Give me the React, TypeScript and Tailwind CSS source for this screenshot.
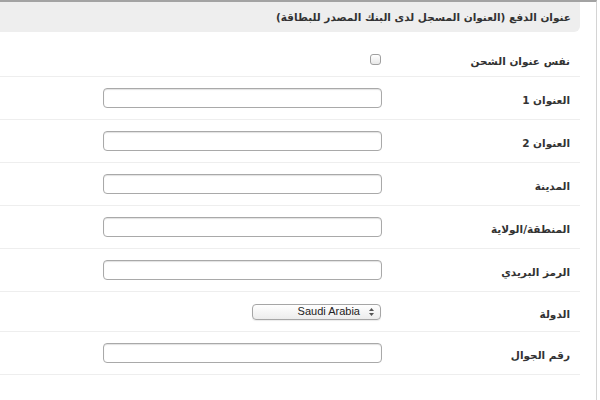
import { useState } from 'react'

const FIELDS = [
  { label: 'العنوان 1', kind: 'text' },
  { label: 'العنوان 2', kind: 'text' },
  { label: 'المدينة', kind: 'text' },
  { label: 'المنطقة/الولاية', kind: 'text' },
  { label: 'الرمز البريدي', kind: 'text' },
  { label: 'الدولة', kind: 'select' },
  { label: 'رقم الجوال', kind: 'text' },
] as const

function TextInput() {
  return (
    <input
      type="text"
      className="h-[20px] w-[279px] rounded-[4px] border border-[#a9a9a9] bg-white shadow-[inset_0_1px_1px_rgba(0,0,0,0.12)] outline-none"
    />
  )
}

function CountrySelect() {
  return (
    <div
      dir="ltr"
      className="flex h-[16px] w-[129px] items-center justify-end gap-[9px] rounded-[4px] border border-[#a6a6a6] bg-gradient-to-b from-white to-[#ececec] pr-[6px] text-[11px] text-[#222] shadow-[0_1px_1px_rgba(0,0,0,0.08)]"
      style={{ fontFamily: '"Liberation Sans", sans-serif' }}
    >
      <span>Saudi Arabia</span>
      <svg width="5" height="8" viewBox="0 0 5 8" className="fill-[#555]">
        <path d="M2.5 0 L5 3 L0 3 Z" />
        <path d="M2.5 8 L5 5 L0 5 Z" />
      </svg>
    </div>
  )
}

export default function App() {
  const [same, setSame] = useState(false)

  return (
    <div
      className="h-[400px] w-[600px] overflow-hidden bg-white text-[#333]"
      style={{ fontFamily: '"DejaVu Sans", "Liberation Sans", sans-serif' }}
    >
      <div className="h-[400px] w-[597px] border-t-2 border-r border-t-[#a3a3a3] border-r-[#d4d4d4]">
        <div dir="rtl" className="w-[580px]">
          <div className="flex h-[30px] items-center rounded-br-[6px] bg-[#eeeeee] pr-[9px] pt-[1px] text-[10.5px] font-bold">
            عنوان الدفع (العنوان المسجل لدى البنك المصدر للبطاقة)
          </div>

          <div className="flex h-[45px] items-center border-b border-[#eeeeee] pt-[10px]">
            <div className="w-[198px] pr-[10px] pt-[6px] text-[10.5px] font-bold">نفس عنوان الشحن</div>
            <label className="flex items-center">
              <input
                type="checkbox"
                checked={same}
                onChange={(e) => setSame(e.target.checked)}
                className="mr-[1px] h-[11px] w-[11px] appearance-none rounded-[3px] border border-[#a0a0a0] bg-gradient-to-b from-white to-[#e8e8e8]"
              />
            </label>
          </div>

          {FIELDS.map((f) => (
            <div
              key={f.label}
              className={`flex items-center border-b border-[#eeeeee] ${f.kind === 'select' ? 'h-[40px]' : 'h-[43px]'}`}
            >
              <div className="w-[198px] pr-[10px] pt-[6px] text-[10.5px] font-bold">{f.label}</div>
              {f.kind === 'select' ? (
                <div className="mr-[1px]">
                  <CountrySelect />
                </div>
              ) : (
                <TextInput />
              )}
            </div>
          ))}
        </div>
      </div>
    </div>
  )
}
